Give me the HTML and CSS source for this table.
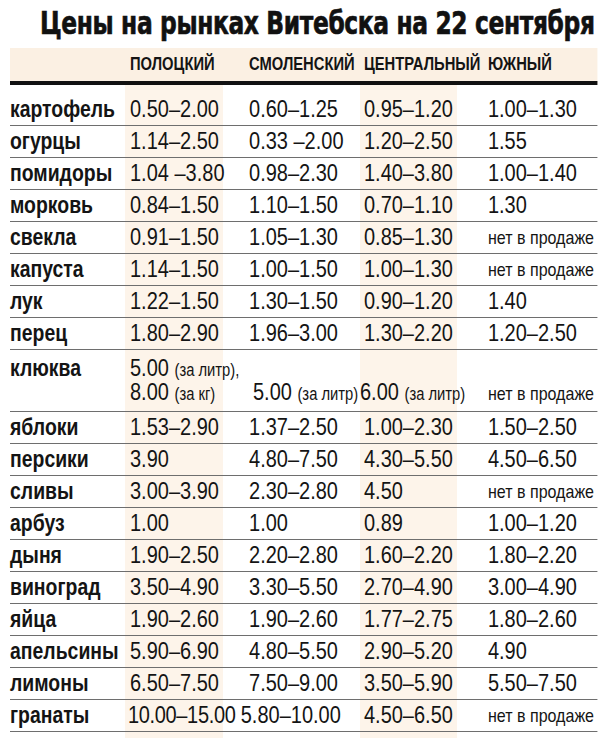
FILE: index.html
```html
<!DOCTYPE html>
<html lang="ru">
<head>
<meta charset="utf-8">
<title>Цены на рынках Витебска</title>
<link rel="stylesheet" href="styles.css">
</head>
<body>
<div class="page">
  <div class="title-wrap"><h1 class="title">Цены на рынках Витебска на 22 сентября</h1></div>
  <div class="table">
    <div class="head">
      <div></div>
      <div class="c1">ПОЛОЦКИЙ</div>
      <div class="c2">СМОЛЕНСКИЙ</div>
      <div class="c3">ЦЕНТРАЛЬНЫЙ</div>
      <div class="c4">ЮЖНЫЙ</div>
    </div>
    <div class="body">
      <div class="row first"><div class="lab">картофель</div><div class="c1">0.50–2.00</div><div class="c2">0.60–1.25</div><div class="c3">0.95–1.20</div><div class="c4">1.00–1.30</div></div>
      <div class="row"><div class="lab">огурцы</div><div class="c1">1.14–2.50</div><div class="c2">0.33 –2.00</div><div class="c3">1.20–2.50</div><div class="c4">1.55</div></div>
      <div class="row"><div class="lab">помидоры</div><div class="c1">1.04 –3.80</div><div class="c2">0.98–2.30</div><div class="c3">1.40–3.80</div><div class="c4">1.00–1.40</div></div>
      <div class="row"><div class="lab">морковь</div><div class="c1">0.84–1.50</div><div class="c2">1.10–1.50</div><div class="c3">0.70–1.10</div><div class="c4">1.30</div></div>
      <div class="row"><div class="lab">свекла</div><div class="c1">0.91–1.50</div><div class="c2">1.05–1.30</div><div class="c3">0.85–1.30</div><div class="c4 na">нет в продаже</div></div>
      <div class="row"><div class="lab">капуста</div><div class="c1">1.14–1.50</div><div class="c2">1.00–1.50</div><div class="c3">1.00–1.30</div><div class="c4 na">нет в продаже</div></div>
      <div class="row"><div class="lab">лук</div><div class="c1">1.22–1.50</div><div class="c2">1.30–1.50</div><div class="c3">0.90–1.20</div><div class="c4">1.40</div></div>
      <div class="row"><div class="lab">перец</div><div class="c1">1.80–2.90</div><div class="c2">1.96–3.00</div><div class="c3">1.30–2.20</div><div class="c4">1.20–2.50</div></div>
      <div class="row tall"><div class="lab">клюква</div><div class="c1">5.00 <span class="unit">(за литр),</span><br>8.00 <span class="unit">(за кг)</span></div><div class="c2 shift">5.00 <span class="unit">(за литр)</span></div><div class="c3 tight">6.00 <span class="unit">(за литр)</span></div><div class="c4 na">нет в продаже</div></div>
      <div class="row"><div class="lab">яблоки</div><div class="c1">1.53–2.90</div><div class="c2">1.37–2.50</div><div class="c3">1.00–2.30</div><div class="c4">1.50–2.50</div></div>
      <div class="row"><div class="lab">персики</div><div class="c1">3.90</div><div class="c2">4.80–7.50</div><div class="c3">4.30–5.50</div><div class="c4">4.50–6.50</div></div>
      <div class="row"><div class="lab">сливы</div><div class="c1">3.00–3.90</div><div class="c2">2.30–2.80</div><div class="c3">4.50</div><div class="c4 na">нет в продаже</div></div>
      <div class="row"><div class="lab">арбуз</div><div class="c1">1.00</div><div class="c2">1.00</div><div class="c3">0.89</div><div class="c4">1.00–1.20</div></div>
      <div class="row"><div class="lab">дыня</div><div class="c1">1.90–2.50</div><div class="c2">2.20–2.80</div><div class="c3">1.60–2.20</div><div class="c4">1.80–2.20</div></div>
      <div class="row"><div class="lab">виноград</div><div class="c1">3.50–4.90</div><div class="c2">3.30–5.50</div><div class="c3">2.70–4.90</div><div class="c4">3.00–4.90</div></div>
      <div class="row"><div class="lab">яйца</div><div class="c1">1.90–2.60</div><div class="c2">1.90–2.60</div><div class="c3">1.77–2.75</div><div class="c4">1.80–2.60</div></div>
      <div class="row"><div class="lab">апельсины</div><div class="c1">5.90–6.90</div><div class="c2">4.80–5.50</div><div class="c3">2.90–5.20</div><div class="c4">4.90</div></div>
      <div class="row"><div class="lab">лимоны</div><div class="c1">6.50–7.50</div><div class="c2">7.50–9.00</div><div class="c3">3.50–5.90</div><div class="c4">5.50–7.50</div></div>
      <div class="row"><div class="lab">гранаты</div><div class="c1 packed">10.00–15.00</div><div class="c2 wide">5.80–10.00</div><div class="c3">4.50–6.50</div><div class="c4 na">нет в продаже</div></div>
    </div>
  </div>
</div>
</body>
</html>
```
FILE: styles.css
```css
html, body {
  margin: 0;
  padding: 0;
  background: #ffffff;
}
.page {
  width: 600px;
  height: 738px;
  overflow: hidden;
  color: #141414;
  font-family: "Liberation Sans", Arial, sans-serif;
}
.title-wrap {
  height: 48px;
  padding-left: 40px;
  overflow: hidden;
}
.title {
  margin: 0;
  display: inline-block;
  white-space: nowrap;
  font-family: "DejaVu Sans", sans-serif;
  font-weight: 700;
  font-size: 31.5px;
  line-height: 46px;
  letter-spacing: -0.5px;
  -webkit-text-stroke: 0.7px #111;
  transform: scaleX(0.742);
  transform-origin: 0 0;
  color: #111;
}
/* Condensed type: the table is laid out at full width and narrowed as a whole */
.table {
  margin-left: 10px;
  width: 699px;
  transform: scaleX(0.844);
  transform-origin: 0 0;
}
.head,
.row {
  display: grid;
  grid-template-columns: 136.3px 116.1px 162.3px 114.9px 1fr;
}
.head {
  height: 33px;
  align-items: center;
  background: #fbf0e3;
  border-bottom: 4px solid #111;
  font-weight: 700;
  font-size: 17.5px;
  width: 695.5px;
}
.body {
  width: 695.5px;
  height: 653px;
  background: linear-gradient(to right,
    transparent 0 136.3px,
    #fdf4ea 136.3px 252.4px,
    transparent 252.4px 414.7px,
    #fdf4ea 414.7px 529.6px,
    transparent 529.6px);
}
.row {
  border-bottom: 1px solid #6e6e6e;
  font-size: 23.7px;
  line-height: 31px;
  align-items: center;
}
.row.first {
  padding-top: 9px;
}
.lab {
  font-weight: 700;
  font-size: 23px;
  white-space: nowrap;
}
.c1 { padding-left: 5.9px; white-space: nowrap; }
.c2 { padding-left: 30.8px; white-space: nowrap; }
.c3 { padding-left: 4.7px; white-space: nowrap; }
.c4 { padding-left: 36.7px; white-space: nowrap; }
.c1.packed { padding-left: 3.5px; letter-spacing: -0.4px; }
.c2.wide { padding-left: 21px; }
.c2.shift { padding-left: 35.5px; }
.c3.tight { padding-left: 0; }
.na {
  font-size: 19px;
}
.unit {
  font-size: 17.5px;
}
.row.tall {
  line-height: 22px;
  padding-top: 7px;
  padding-bottom: 6px;
  align-items: end;
}
.row.tall .lab {
  align-self: start;
}
```
